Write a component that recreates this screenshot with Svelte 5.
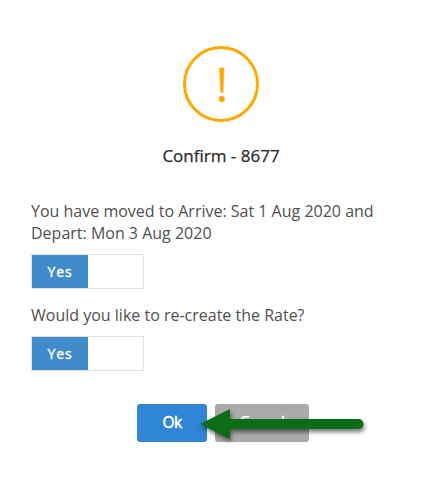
<script>
  const questions = [
    'You have moved to Arrive: Sat 1 Aug 2020 and Depart: Mon 3 Aug 2020',
    'Would you like to re-create the Rate?'
  ];
</script>

<main class="dialog">
  <div class="warning"><span>!</span></div>
  <h1>Confirm - 8677</h1>
  <div class="questions">
    {#each questions as question}
      <section>
        <p>{question}</p>
        <div class="toggle"><span class="on">Yes</span></div>
      </section>
    {/each}
  </div>
  <div class="actions">
    <button class="ok">Ok</button>
    <button class="cancel">Cancel</button>
    <svg class="arrow" width="180" height="50" viewBox="0 0 180 50" aria-hidden="true">
      <path d="M5 25 35 10V20H163.500A5 5 0 0 1 163.500 30H35V40Z" fill="#0d6c17" />
    </svg>
  </div>
</main>

<style>
  :global(body) { background: #fff; }
  .dialog {
    box-sizing: border-box;
    width: 443px;
    height: 486px;
    padding: 46px 31px 0;
    display: flex;
    flex-direction: column;
    font-family: "Open Sans", sans-serif;
    color: #505050;
  }
  .warning {
    box-sizing: border-box;
    width: 76px;
    height: 76px;
    margin-left: 152px;
    border: 3px solid #ffa800;
    border-radius: 50%;
    color: #ffa800;
    display: flex;
    justify-content: center;
    font-size: 47px;
    line-height: 71px;
    padding-left: 2px;
    -webkit-text-stroke: 0.3px #ffa800;
  }
  h1 {
    width: 380px;
    margin: 23px 0 0;
    text-align: center;
    font-size: 17px;
    line-height: 22px;
    font-weight: 400;
    color: #2a2a2a;
    -webkit-text-stroke: 0.25px #2a2a2a;
  }
  .questions {
    margin-top: 33px;
    display: flex;
    flex-direction: column;
    gap: 15px;
  }
  p {
    margin: 0 0 10px;
    width: 360px;
    font-size: 16px;
    line-height: 22px;
    font-weight: 400;
  }
  .toggle {
    box-sizing: border-box;
    width: 113px;
    height: 35px;
    border: 1px solid #e2e2e2;
    display: flex;
  }
  .on {
    width: 56px;
    background: #428bca;
    color: #fff;
    text-align: center;
    font-size: 14px;
    font-weight: 500;
    line-height: 34px;
    letter-spacing: 0.9px;
    -webkit-text-stroke: 0.35px #fff;
  }
  .actions {
    position: relative;
    display: flex;
    gap: 8px;
    margin: 33px 0 0 106px;
  }
  button {
    height: 38px;
    padding: 0 0 2px;
    border: 0;
    border-radius: 3px;
    color: #fff;
    font: 400 15.5px "Open Sans", sans-serif;
    letter-spacing: -0.5px;
    -webkit-text-stroke: 0.5px #fff;
  }
  .ok { width: 70px; background: #3085d6; }
  .cancel { width: 94px; background: #aaa; }
  .arrow {
    position: absolute;
    left: 58px;
    top: -5px;
    filter: drop-shadow(1px 3px 2px #0008);
  }
</style>
